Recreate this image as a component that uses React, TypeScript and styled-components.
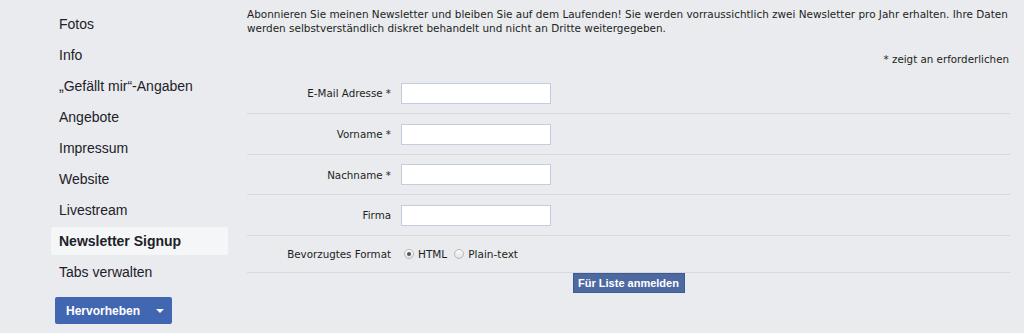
import { createGlobalStyle } from "styled-components";
import styled from "styled-components";

const GlobalStyle = createGlobalStyle`
	html, body {
		margin: 0;
		padding: 0;
		background: #e9ebee;
	}
`;

const Page = styled.div`
	display: flex;
	width: 1024px;
	height: 333px;
	overflow: hidden;
	background: #e9ebee;
`;

const Sidebar = styled.nav`
	width: 177px;
	margin-left: 51px;
	padding-top: 10px;
	display: flex;
	flex-direction: column;
	gap: 3px;
	font-family: "Liberation Sans", Arial, sans-serif;
`;

const NavItem = styled.div<{ $active?: boolean }>`
	height: 28px;
	line-height: 28px;
	padding-left: 8px;
	font-size: 14px;
	color: #1d2129;
	font-weight: ${(p) => (p.$active ? "bold" : "normal")};
	background: ${(p) => (p.$active ? "#f5f6f7" : "transparent")};
	border-radius: 2px;
`;

const SplitButton = styled.div`
	margin: 8px 0 0 4px;
	width: 117px;
	height: 27px;
	display: flex;
	align-items: center;
	justify-content: space-between;
	background: #4267b2;
	border-radius: 2px;
	color: #fff;
	font-weight: bold;
	font-size: 12px;
	padding: 0 8px 0 11px;
	box-sizing: border-box;
`;

const Caret = styled.span`
	width: 0;
	height: 0;
	border-left: 4px solid transparent;
	border-right: 4px solid transparent;
	border-top: 4px solid #fff;
`;

const Main = styled.main`
	width: 763px;
	margin-left: 19px;
	padding-top: 7px;
	font-family: "DejaVu Sans", Verdana, sans-serif;
	font-size: 10.3px;
	color: #1c1e21;
`;

const Intro = styled.p`
	margin: 0;
	line-height: 14px;
	font-size: 10.45px;
`;

const Required = styled.div`
	text-align: right;
	margin-top: 18px;
	height: 20px;
	line-height: 12px;
	padding-right: 1px;
`;

const Row = styled.div<{ $h: number }>`
	display: grid;
	grid-template-columns: 144px 1fr;
	column-gap: 10px;
	align-items: center;
	height: ${(p) => p.$h}px;
	box-sizing: border-box;
	border-bottom: 1px solid #d6d9de;
`;

const Label = styled.label`
	text-align: right;
	color: #1c1e21;
`;

const TextInput = styled.input`
	width: 150px;
	height: 21px;
	box-sizing: border-box;
	border: 1px solid #c4cde0;
	background: #fff;
	margin: 0;
	padding: 2px 3px;
`;

const Radios = styled.div`
	display: flex;
	align-items: center;
	gap: 4px;
	padding-left: 3px;
	font-size: 10.5px;
`;

const Radio = styled.span<{ $checked?: boolean }>`
	width: 10px;
	height: 10px;
	box-sizing: border-box;
	border-radius: 50%;
	border: 1px solid #b9b9b9;
	background: linear-gradient(#fdfdfd, #e2e2e2);
	display: inline-flex;
	align-items: center;
	justify-content: center;
	margin-left: ${(p) => (p.$checked ? 0 : 3)}px;

	&::after {
		content: "";
		width: 4px;
		height: 4px;
		border-radius: 50%;
		background: ${(p) => (p.$checked ? "#555" : "transparent")};
	}
`;

const Actions = styled.div`
	display: flex;
	justify-content: center;
`;

const Submit = styled.button`
	width: 112px;
	height: 20px;
	background: #4e69a2;
	border: 1px solid #3f5a8f;
	color: #fff;
	font-family: "Liberation Sans", Arial, sans-serif;
	font-weight: bold;
	font-size: 11px;
	padding: 0;
`;

const navItems = [
	"Fotos",
	"Info",
	"„Gefällt mir“-Angaben",
	"Angebote",
	"Impressum",
	"Website",
	"Livestream",
	"Newsletter Signup",
	"Tabs verwalten",
];

const fields: [string, number][] = [
	["E-Mail Adresse *", 41],
	["Vorname *", 41],
	["Nachname *", 40],
	["Firma", 41],
];

export default function App() {
	return (
		<Page>
			<GlobalStyle />
			<Sidebar>
				{navItems.map((item) => (
					<NavItem key={item} $active={item === "Newsletter Signup"}>
						{item}
					</NavItem>
				))}
				<SplitButton>
					Hervorheben
					<Caret />
				</SplitButton>
			</Sidebar>
			<Main>
				<Intro>
					Abonnieren Sie meinen Newsletter und bleiben Sie auf dem Laufenden! Sie werden
					vorraussichtlich zwei Newsletter pro Jahr erhalten. Ihre Daten werden
					selbstverständlich diskret behandelt und nicht an Dritte weitergegeben.
				</Intro>
				<Required>* zeigt an erforderlichen</Required>
				{fields.map(([f, h]) => (
					<Row key={f} $h={h}>
						<Label>{f}</Label>
						<TextInput type="text" />
					</Row>
				))}
				<Row $h={37}>
					<Label>Bevorzugtes Format</Label>
					<Radios>
						<Radio $checked />
						HTML
						<Radio />
						Plain-text
					</Radios>
				</Row>
				<Actions>
					<Submit>Für Liste anmelden</Submit>
				</Actions>
			</Main>
		</Page>
	);
}
